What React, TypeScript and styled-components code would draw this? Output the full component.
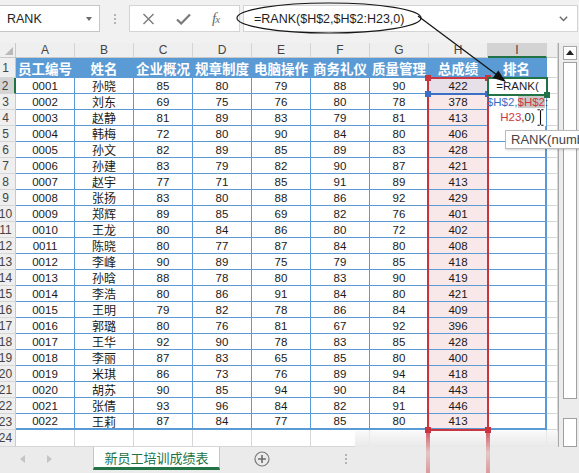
import React from 'react';
import styled, { createGlobalStyle } from 'styled-components';

type Row = [string, string, number, number, number, number, number, number];

const rows: Row[] = [
  ['0001', '孙晓', 85, 80, 79, 88, 90, 422],
  ['0002', '刘东', 69, 75, 76, 80, 78, 378],
  ['0003', '赵静', 81, 89, 83, 79, 81, 413],
  ['0004', '韩梅', 72, 80, 90, 84, 80, 406],
  ['0005', '孙文', 82, 89, 85, 89, 83, 428],
  ['0006', '孙建', 83, 79, 82, 90, 87, 421],
  ['0007', '赵宇', 77, 71, 85, 91, 89, 413],
  ['0008', '张扬', 83, 80, 88, 86, 92, 429],
  ['0009', '郑辉', 89, 85, 69, 82, 76, 401],
  ['0010', '王龙', 80, 84, 86, 80, 72, 402],
  ['0011', '陈晓', 80, 77, 87, 84, 80, 408],
  ['0012', '李峰', 90, 89, 75, 79, 85, 418],
  ['0013', '孙晗', 88, 78, 80, 83, 90, 419],
  ['0014', '李浩', 80, 86, 91, 84, 80, 421],
  ['0015', '王明', 79, 82, 78, 86, 84, 409],
  ['0016', '郭璐', 80, 76, 81, 67, 92, 396],
  ['0017', '王华', 92, 90, 78, 83, 85, 428],
  ['0018', '李丽', 87, 83, 65, 85, 80, 400],
  ['0019', '米琪', 86, 73, 76, 89, 94, 418],
  ['0020', '胡苏', 90, 85, 94, 90, 84, 443],
  ['0021', '张倩', 93, 96, 84, 82, 91, 446],
  ['0022', '王莉', 87, 84, 77, 85, 80, 413],
];

const letters = ['A', 'B', 'C', 'D', 'E', 'F', 'G', 'H', 'I'];
const headers = ['员工编号', '姓名', '企业概况', '规章制度', '电脑操作', '商务礼仪', '质量管理', '总成绩', '排名'];

const GREEN = '#217346';
const BLUE = '#5b9bd5';
const RED = '#c8353e';
const REFBLUE = '#3b6fc6';

const GlobalStyle = createGlobalStyle`
  html, body { margin: 0; padding: 0; background: #fff; }
  body { font-family: "Liberation Sans", "Noto Sans CJK SC", sans-serif; }
  * { box-sizing: border-box; }
`;

const Frame = styled.div`
  position: relative;
  width: 579px;
  height: 473px;
  overflow: hidden;
  background: #f1f1f1;
  font-family: "Liberation Sans", "Noto Sans CJK SC", sans-serif;
`;

/* ---------- formula bar ---------- */
const FormulaBar = styled.div`
  display: flex;
  align-items: stretch;
  height: 43px;
  padding: 5px 0 11px 0;
`;

const NameBox = styled.div`
  width: 101px;
  margin-left: -1px;
  background: #fff;
  border: 1px solid #c6c6c6;
  display: flex;
  align-items: center;
  justify-content: space-between;
  padding: 0 7px 0 7px;
  font-size: 12.5px;
  color: #222;
`;

const DropCaret = styled.span`
  width: 0;
  height: 0;
  border-left: 3.5px solid transparent;
  border-right: 3.5px solid transparent;
  border-top: 4px solid #6a6a6a;
`;

const Grip = styled.div`
  width: 29px;
  display: flex;
  flex-direction: column;
  align-items: center;
  justify-content: center;
  gap: 2px;
`;

const GripDot = styled.span`
  width: 2px;
  height: 2px;
  background: #b3b3b3;
`;

const ActionBox = styled.div`
  width: 111px;
  background: #fff;
  border: 1px solid #d4d4d4;
  display: flex;
  align-items: center;
  padding-left: 12px;
  gap: 21px;
`;

const FxMark = styled.span`
  font-family: "Liberation Serif", serif;
  font-style: italic;
  font-size: 15px;
  color: #6b6b6b;
  letter-spacing: -1px;
  & > small {
    font-size: 11px;
  }
`;

const FormulaInput = styled.div`
  flex: 1;
  margin-left: 3px;
  margin-right: 1px;
  background: #fff;
  border: 1px solid #d4d4d4;
  display: flex;
  align-items: center;
  justify-content: space-between;
  padding: 0 9px 0 10px;
  font-size: 12.5px;
  color: #1e1e1e;
`;

/* ---------- sheet ---------- */
const SheetArea = styled.div`
  display: flex;
  height: 404px;
`;

const Grid = styled.div`
  width: 558px;
  display: grid;
  grid-template-columns: 16px repeat(9, 59px) 11px;
  grid-template-rows: 15px 20px repeat(22, 16px) 17px;
  background: #fff;
`;

const Corner = styled.div`
  position: relative;
  background: #efefef;
  border-right: 1px solid #c9c9c9;
  border-bottom: 1px solid #c9c9c9;
  &::after {
    content: '';
    position: absolute;
    right: 2px;
    bottom: 2px;
    width: 0;
    height: 0;
    border-left: 8px solid transparent;
    border-bottom: 8px solid #b9b9b9;
  }
`;

const ColHead = styled.div<{ $active?: boolean }>`
  display: flex;
  align-items: center;
  justify-content: center;
  background: ${(p) => (p.$active ? '#d3d3d3' : '#efefef')};
  border-right: 1px solid #d4d4d4;
  border-bottom: ${(p) => (p.$active ? `2px solid ${GREEN}` : '1px solid #c9c9c9')};
  font-size: 12px;
  color: #444;
  padding-top: ${(p) => (p.$active ? '1px' : '0')};
`;

const RowHead = styled.div<{ $active?: boolean }>`
  display: flex;
  align-items: center;
  justify-content: center;
  padding-right: 4px;
  background: ${(p) => (p.$active ? '#d3d3d3' : '#efefef')};
  border-right: ${(p) => (p.$active ? `2px solid ${GREEN}` : '1px solid #c9c9c9')};
  border-bottom: 1px solid #d6d6d6;
  font-size: 12px;
  color: #444;
  white-space: nowrap;
`;

const HeadCell = styled.div<{ $edge?: boolean }>`
  display: flex;
  align-items: center;
  justify-content: center;
  background: ${BLUE};
  border-right: ${(p) => (p.$edge ? '2px' : '1px')} solid ${BLUE};
  color: #fff;
  font-family: "Noto Sans CJK SC", sans-serif;
  font-weight: 700;
  font-size: 13.5px;
  white-space: nowrap;
  overflow: visible;
`;

const DataCell = styled.div<{ $tint?: 'range' | 'ref'; $bottom?: boolean; $edge?: boolean; $cjk?: boolean }>`
  display: flex;
  align-items: center;
  justify-content: center;
  background: ${(p) => (p.$tint === 'range' ? '#f9e8ea' : p.$tint === 'ref' ? '#e8e0e9' : '#fff')};
  border-right: ${(p) => (p.$edge ? '2px' : '1px')} solid ${BLUE};
  border-bottom: ${(p) => (p.$bottom ? '2px' : '1px')} solid ${BLUE};
  font-family: ${(p) => (p.$cjk ? '"Noto Sans CJK SC", sans-serif' : '"Liberation Sans", sans-serif')};
  font-size: ${(p) => (p.$cjk ? '12px' : '11.5px')};
  color: #1a1a1a;
  white-space: nowrap;
`;

const BlankCell = styled.div`
  background: #fff;
  border-right: 1px solid #d6d6d6;
  border-bottom: 1px solid #d6d6d6;
`;

const VScroll = styled.div`
  width: 21px;
  background: #ececec;
  border-left: 1px solid #a8a8a8;
  padding: 3px 2px 0 4px;
  display: flex;
  flex-direction: column;
`;

const ScrollBtn = styled.div`
  height: 14px;
  background: #fff;
  border: 1px solid #a6a6a6;
  display: flex;
  align-items: center;
  justify-content: center;
`;

const ScrollThumb = styled.div<{ $h: number; $gap: number }>`
  height: ${(p) => p.$h}px;
  margin-top: ${(p) => p.$gap}px;
  background: #fff;
  border: 1px solid #a0a0a0;
`;

/* ---------- overlays ---------- */
const RefFrame = styled.div`
  position: absolute;
  left: 427px;
  top: 77px;
  width: 62px;
  height: 18px;
  border: 2px solid ${REFBLUE};
  z-index: 2;
`;

const RangeFrame = styled.div`
  position: absolute;
  left: 427px;
  top: 77px;
  width: 62px;
  height: 354px;
  border: 2px solid ${RED};
  border-bottom-width: 2px;
  z-index: 3;
`;

const Handle = styled.div<{ $x: number; $y: number; $c: string }>`
  position: absolute;
  left: ${(p) => p.$x - 3}px;
  top: ${(p) => p.$y - 3}px;
  width: 6px;
  height: 6px;
  background: ${(p) => p.$c};
  z-index: 5;
`;

const Trail = styled.div<{ $x: number }>`
  position: absolute;
  left: ${(p) => p.$x}px;
  top: 433px;
  width: 4px;
  height: 40px;
  background: linear-gradient(rgba(200, 53, 62, 0.75), rgba(200, 53, 62, 0.2) 50%, rgba(200, 53, 62, 0.45));
  filter: blur(0.6px);
  z-index: 4;
`;

const Fade = styled.div`
  position: absolute;
  left: 355px;
  top: 431px;
  width: 203px;
  height: 16px;
  background: linear-gradient(rgba(245, 245, 245, 0.6), #e9e9e9);
  z-index: 3;
`;

const ActiveFrame = styled.div`
  position: absolute;
  left: 487px;
  top: 77px;
  width: 61px;
  height: 19px;
  border: 2px solid ${GREEN};
  z-index: 6;
`;

const EditBox = styled.div`
  position: absolute;
  left: 489px;
  top: 79px;
  width: 57px;
  height: 47px;
  background: #fff;
  z-index: 5;
  display: flex;
  flex-direction: column;
  align-items: center;
  font-family: "Liberation Sans", sans-serif;
  font-size: 11.5px;
  color: #1e1e1e;
`;

const EditLine = styled.div`
  height: 16px;
  line-height: 15px;
  white-space: nowrap;
`;

const RefText = styled.span<{ $tone: 'blue' | 'red'; $sel?: boolean }>`
  color: ${(p) => (p.$tone === 'blue' ? REFBLUE : '#d0363f')};
  background: ${(p) => (p.$sel ? '#c8c8c8' : 'transparent')};
`;

const Cursor = styled.svg`
  position: absolute;
  left: 537px;
  top: 109px;
  z-index: 7;
`;

const Tip = styled.div`
  position: absolute;
  left: 505px;
  top: 130px;
  width: 140px;
  height: 19px;
  background: #fff;
  border: 1px solid #bcbcbc;
  box-shadow: 1px 1px 2px rgba(0, 0, 0, 0.18);
  padding-left: 5px;
  font-size: 13px;
  line-height: 17px;
  color: #444;
  white-space: nowrap;
  z-index: 8;
`;

const Annotation = styled.svg`
  position: absolute;
  left: 0;
  top: 0;
  pointer-events: none;
  z-index: 10;
`;

/* ---------- tab bar ---------- */
const TabBar = styled.div`
  height: 26px;
  display: flex;
  align-items: flex-start;
  background: #ebebeb;
`;

const NavArrows = styled.div`
  width: 93px;
  height: 23px;
  display: flex;
  align-items: center;
  padding-left: 20px;
  gap: 22px;
`;

const SheetTab = styled.div`
  width: 127px;
  height: 23px;
  background: #fff;
  border-left: 1px solid #c6c6c6;
  border-right: 1px solid #c6c6c6;
  border-bottom: 3px solid ${GREEN};
  display: flex;
  align-items: center;
  justify-content: center;
  font-family: "Noto Sans CJK SC", sans-serif;
  font-size: 13px;
  color: ${GREEN};
`;

const AddButton = styled.svg`
  margin-left: 34px;
  margin-top: 4px;
`;

const TabGrip = styled.div`
  margin-left: 75px;
  height: 23px;
  display: flex;
  flex-direction: column;
  justify-content: center;
  gap: 2px;
`;

export default function App() {
  const cells: React.ReactNode[] = [];

  cells.push(<Corner key="corner" />);
  letters.forEach((l) => cells.push(<ColHead key={`ch-${l}`} $active={l === 'I'}>{l}</ColHead>));
  cells.push(<ColHead key="ch-J" />);

  cells.push(<RowHead key="rh-1">1</RowHead>);
  headers.forEach((h, i) => cells.push(<HeadCell key={`h-${i}`} $edge={i === 8}>{h}</HeadCell>));
  cells.push(<BlankCell key="b-1" />);

  rows.forEach((r, ri) => {
    const rn = ri + 2;
    const last = ri === rows.length - 1;
    cells.push(<RowHead key={`rh-${rn}`} $active={rn === 2}>{rn}</RowHead>);
    r.forEach((v, ci) => {
      const tint = ci === 7 ? (rn === 2 ? 'ref' : 'range') : undefined;
      cells.push(
        <DataCell key={`c-${rn}-${ci}`} $cjk={ci === 1} $tint={tint} $bottom={last}>
          {v}
        </DataCell>
      );
    });
    cells.push(<DataCell key={`c-${rn}-I`} $edge $bottom={last} />);
    cells.push(<BlankCell key={`b-${rn}`} />);
  });

  cells.push(<RowHead key="rh-24">24</RowHead>);
  for (let i = 0; i < 10; i++) cells.push(<BlankCell key={`b24-${i}`} />);

  return (
    <Frame>
      <GlobalStyle />
      <FormulaBar>
        <NameBox>
          RANK
          <DropCaret />
        </NameBox>
        <Grip>
          <GripDot />
          <GripDot />
          <GripDot />
        </Grip>
        <ActionBox>
          <svg width="13" height="12" viewBox="0 0 13 12">
            <path d="M1.5 1 L11.5 11 M11.5 1 L1.5 11" stroke="#7a7a7a" strokeWidth="1.4" fill="none" />
          </svg>
          <svg width="15" height="12" viewBox="0 0 15 12">
            <path d="M1 6.5 L5.2 10.5 L14 1.5" stroke="#7a7a7a" strokeWidth="2.2" fill="none" />
          </svg>
          <FxMark>
            f<small>x</small>
          </FxMark>
        </ActionBox>
        <FormulaInput>
          =RANK($H$2,$H$2:H23,0)
          <svg width="9" height="6" viewBox="0 0 9 6">
            <path d="M0.8 0.8 L4.5 4.6 L8.2 0.8" stroke="#6a6a6a" strokeWidth="1.4" fill="none" />
          </svg>
        </FormulaInput>
      </FormulaBar>

      <SheetArea>
        <Grid>{cells}</Grid>
        <VScroll>
          <ScrollBtn>
            <svg width="8" height="5" viewBox="0 0 8 5">
              <path d="M0 5 L4 0 L8 5 Z" fill="#222" />
            </svg>
          </ScrollBtn>
          <ScrollThumb $h={352} $gap={2} />
          <ScrollThumb $h={30} $gap={19} />
        </VScroll>
      </SheetArea>

      <TabBar>
        <NavArrows>
          <svg width="5" height="8" viewBox="0 0 5 8">
            <path d="M5 0 L0 4 L5 8 Z" fill="#c4c4c4" />
          </svg>
          <svg width="5" height="8" viewBox="0 0 5 8">
            <path d="M0 0 L5 4 L0 8 Z" fill="#c4c4c4" />
          </svg>
        </NavArrows>
        <SheetTab>新员工培训成绩表</SheetTab>
        <AddButton width="16" height="16" viewBox="0 0 16 16">
          <circle cx="8" cy="8" r="7" stroke="#7b7b7b" strokeWidth="1.2" fill="none" />
          <path d="M8 4 V12 M4 8 H12" stroke="#6b6b6b" strokeWidth="1.6" />
        </AddButton>
        <TabGrip>
          <GripDot />
          <GripDot />
          <GripDot />
        </TabGrip>
      </TabBar>

      {/* reference highlights over the sheet */}
      <RefFrame />
      <RangeFrame />
      <Handle $x={428} $y={78} $c={RED} />
      <Handle $x={488} $y={78} $c={RED} />
      <Handle $x={428} $y={94} $c={REFBLUE} />
      <Handle $x={488} $y={94} $c={REFBLUE} />
      <Handle $x={428} $y={430} $c={RED} />
      <Handle $x={488} $y={430} $c={RED} />
      <Trail $x={426} />
      <Trail $x={486} />
      <Fade />

      <EditBox>
        <EditLine>=RANK(</EditLine>
        <EditLine>
          <RefText $tone="blue">$H$2,</RefText>
          <RefText $tone="red" $sel>
            $H$2
          </RefText>
          :
        </EditLine>
        <EditLine>
          <RefText $tone="red">H23</RefText>,0)
        </EditLine>
      </EditBox>
      <ActiveFrame />
      <Handle $x={547} $y={95} $c={GREEN} />
      <Cursor width="7" height="17" viewBox="0 0 7 17">
        <path d="M0.5 0.8 H2.8 M4.2 0.8 H6.5 M3.5 1.2 V15.8 M0.5 16.2 H2.8 M4.2 16.2 H6.5" stroke="#111" strokeWidth="1.1" fill="none" />
      </Cursor>
      <Tip>RANK(number, ref, [order])</Tip>

      <Annotation width="579" height="473" viewBox="0 0 579 473">
        <ellipse cx="329" cy="18" rx="92" ry="15" stroke="#161616" strokeWidth="1.2" fill="none" />
        <line x1="418" y1="16" x2="497" y2="75" stroke="#161616" strokeWidth="1.3" />
        <polygon points="506,82 498.3,70.4 492.7,77.9" fill="#111" />
      </Annotation>
    </Frame>
  );
}
